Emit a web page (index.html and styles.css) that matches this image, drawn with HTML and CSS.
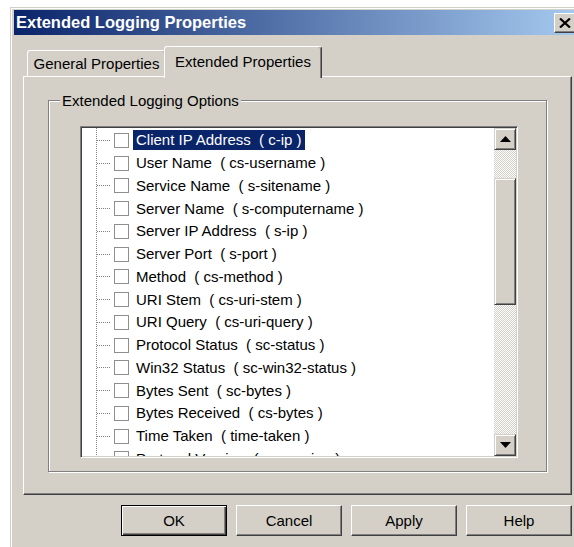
FILE: index.html
```html
<!DOCTYPE html>
<html lang="en">
<head>
<meta charset="utf-8">
<title>Extended Logging Properties</title>
<link rel="stylesheet" href="styles.css">
</head>
<body>
<div class="window">
  <div class="titlebar">
    <span class="title">Extended Logging Properties</span>
    <button class="close" aria-label="Close">
      <svg width="12" height="10" viewBox="0 0 12 10"><path d="M1 0.5 L11 9.5 M11 0.5 L1 9.5" stroke="#000" stroke-width="2.2" fill="none"/></svg>
    </button>
  </div>
  <div class="dialog">
    <div class="tabs">
      <div class="tab">General Properties</div>
      <div class="tab active">Extended Properties</div>
    </div>
    <div class="panel">
      <fieldset class="group">
        <legend>Extended Logging Options</legend>
        <div class="group-body">
          <div class="listbox">
            <ul class="tree">
              <li class="row"><span class="branch"></span><span class="check"></span><span class="label selected">Client IP Address  ( c-ip )</span></li>
              <li class="row"><span class="branch"></span><span class="check"></span><span class="label">User Name  ( cs-username )</span></li>
              <li class="row"><span class="branch"></span><span class="check"></span><span class="label">Service Name  ( s-sitename )</span></li>
              <li class="row"><span class="branch"></span><span class="check"></span><span class="label">Server Name  ( s-computername )</span></li>
              <li class="row"><span class="branch"></span><span class="check"></span><span class="label">Server IP Address  ( s-ip )</span></li>
              <li class="row"><span class="branch"></span><span class="check"></span><span class="label">Server Port  ( s-port )</span></li>
              <li class="row"><span class="branch"></span><span class="check"></span><span class="label">Method  ( cs-method )</span></li>
              <li class="row"><span class="branch"></span><span class="check"></span><span class="label">URI Stem  ( cs-uri-stem )</span></li>
              <li class="row"><span class="branch"></span><span class="check"></span><span class="label">URI Query  ( cs-uri-query )</span></li>
              <li class="row"><span class="branch"></span><span class="check"></span><span class="label">Protocol Status  ( sc-status )</span></li>
              <li class="row"><span class="branch"></span><span class="check"></span><span class="label">Win32 Status  ( sc-win32-status )</span></li>
              <li class="row"><span class="branch"></span><span class="check"></span><span class="label">Bytes Sent  ( sc-bytes )</span></li>
              <li class="row"><span class="branch"></span><span class="check"></span><span class="label">Bytes Received  ( cs-bytes )</span></li>
              <li class="row"><span class="branch"></span><span class="check"></span><span class="label">Time Taken  ( time-taken )</span></li>
              <li class="row"><span class="branch"></span><span class="check"></span><span class="label">Protocol Version  ( cs-version )</span></li>
            </ul>
            <div class="scrollbar">
              <div class="sb-btn"><svg width="11" height="6" viewBox="0 0 11 6"><polygon points="0,6 11,6 5.5,0" fill="#000"/></svg></div>
              <div class="sb-track sb-track-top"></div>
              <div class="sb-thumb"></div>
              <div class="sb-track sb-track-rest"></div>
              <div class="sb-btn"><svg width="11" height="6" viewBox="0 0 11 6"><polygon points="0,0 11,0 5.5,6" fill="#000"/></svg></div>
            </div>
          </div>
        </div>
      </fieldset>
    </div>
    <div class="buttons">
      <button class="btn default">OK</button>
      <button class="btn">Cancel</button>
      <button class="btn">Apply</button>
      <button class="btn">Help</button>
    </div>
  </div>
</div>
</body>
</html>
```

FILE: styles.css
```css
html, body {
  margin: 0;
  height: 100%;
  overflow: hidden;
  background: #fff;
}

body {
  font-family: "Liberation Sans", Arial, sans-serif;
  font-size: 15px;
  color: #000;
}

/* dialog frame */
.window {
  margin: 7px 0 0 10px;
  width: 575px;
  height: 560px;
  box-sizing: border-box;
  background: #d4d0c8;
  border: 1px solid;
  border-color: #d4d0c8 #404040 #404040 #d4d0c8;
  box-shadow: inset 1px 1px 0 #fff, inset -1px -1px 0 #808080;
  padding: 2px 3px 3px 3px;
}

.titlebar {
  height: 25px;
  display: flex;
  align-items: center;
  justify-content: space-between;
  background: linear-gradient(to right, #0a246a, #a6caf0);
  padding: 0 2px;
}

.title {
  color: #fff;
  font-weight: bold;
  font-size: 16.5px;
  line-height: 25px;
}

.close {
  width: 22px;
  height: 20px;
  margin-right: 3px;
  padding: 0;
  box-sizing: border-box;
  background: #d4d0c8;
  border: 1px solid;
  border-color: #fff #404040 #404040 #fff;
  box-shadow: inset -1px -1px 0 #808080;
  display: flex;
  align-items: center;
  justify-content: center;
}

.dialog {
  padding: 11px 9px 0 9px;
}

/* tab strip */
.tabs {
  display: flex;
  align-items: flex-end;
  height: 30px;
  padding-left: 4px;
}

.tab {
  box-sizing: border-box;
  width: 139px;
  height: 26px;
  background: #d4d0c8;
  border: 1px solid;
  border-bottom: none;
  border-color: #fff #404040 transparent #fff;
  box-shadow: inset -1px 0 0 #808080;
  border-radius: 3px 3px 0 0;
  display: flex;
  align-items: center;
  justify-content: center;
}

.tab.active {
  width: 158px;
  height: 32px;
  margin-left: -2px;
  margin-bottom: -2px;
  padding-bottom: 3px;
  position: relative;
  z-index: 1;
}

.panel {
  box-sizing: border-box;
  height: 419px;
  border: 1px solid;
  border-color: #fff #404040 #404040 #fff;
  box-shadow: inset -1px -1px 0 #808080;
  padding: 14px 24px 22px 24px;
  display: flex;
  flex-direction: column;
}

/* etched group box */
.group {
  flex: 1;
  margin: 0;
  padding: 0;
  min-width: 0;
  border: 1px solid #808080;
  box-shadow: inset 1px 1px 0 #fff, 1px 1px 0 #fff;
}

.group legend {
  margin-left: 11px;
  padding: 0 2px;
  line-height: 19px;
  background: #d4d0c8;
}

.group-body {
  padding: 16px 28px 0 31px;
}

/* tree view with check boxes */
.listbox {
  box-sizing: border-box;
  height: 332px;
  border: 1px solid;
  border-color: #808080 #fff #fff #808080;
  box-shadow: inset 1px 1px 0 #404040, inset -1px -1px 0 #d4d0c8;
  padding: 1px;
  display: flex;
  background: #fff;
}

.tree {
  flex: 1;
  margin: 0;
  padding: 1px 0 0 0;
  list-style: none;
  overflow: hidden;
  background: repeating-linear-gradient(to bottom, #808080 0 1px, transparent 1px 2px) 14px 0 / 1px 100% no-repeat;
}

.row {
  height: 22.75px;
  display: flex;
  align-items: center;
  white-space: pre;
}

.branch {
  flex: none;
  margin-left: 15px;
  width: 13px;
  height: 1px;
  background: repeating-linear-gradient(to right, #808080 0 1px, transparent 1px 2px);
}

.check {
  flex: none;
  margin-left: 4px;
  width: 15px;
  height: 15px;
  box-sizing: border-box;
  border: 1px solid #8e8e8e;
  background: #fff;
}

.label {
  margin-left: 4px;
  padding: 0 3px;
  line-height: 20px;
}

.label.selected {
  background: #0a246a;
  color: #fff;
}

/* vertical scroll bar */
.scrollbar {
  flex: none;
  width: 22px;
  display: flex;
  flex-direction: column;
}

.sb-btn,
.sb-thumb {
  box-sizing: border-box;
  background: #d4d0c8;
  border: 1px solid;
  border-color: #d4d0c8 #404040 #404040 #d4d0c8;
  box-shadow: inset 1px 1px 0 #fff, inset -1px -1px 0 #808080;
}

.sb-btn {
  height: 22px;
  display: flex;
  align-items: center;
  justify-content: center;
}

.sb-thumb {
  height: 127px;
}

.sb-track {
  background: repeating-conic-gradient(#fff 0 25%, #d4d0c8 0 50%) 0 0 / 2px 2px;
}

.sb-track-top {
  height: 28px;
}

.sb-track-rest {
  flex: 1;
}

/* command buttons */
.buttons {
  display: flex;
  justify-content: flex-end;
  gap: 9px;
  margin-top: 10px;
}

.btn {
  width: 106px;
  height: 31px;
  box-sizing: border-box;
  padding: 0;
  font: inherit;
  color: #000;
  background: #d4d0c8;
  border: 1px solid;
  border-color: #fff #404040 #404040 #fff;
  box-shadow: inset -1px -1px 0 #808080;
}

.btn.default {
  border-color: #000;
  box-shadow: inset 1px 1px 0 #fff, inset -1px -1px 0 #404040, inset -2px -2px 0 #808080;
}
```
